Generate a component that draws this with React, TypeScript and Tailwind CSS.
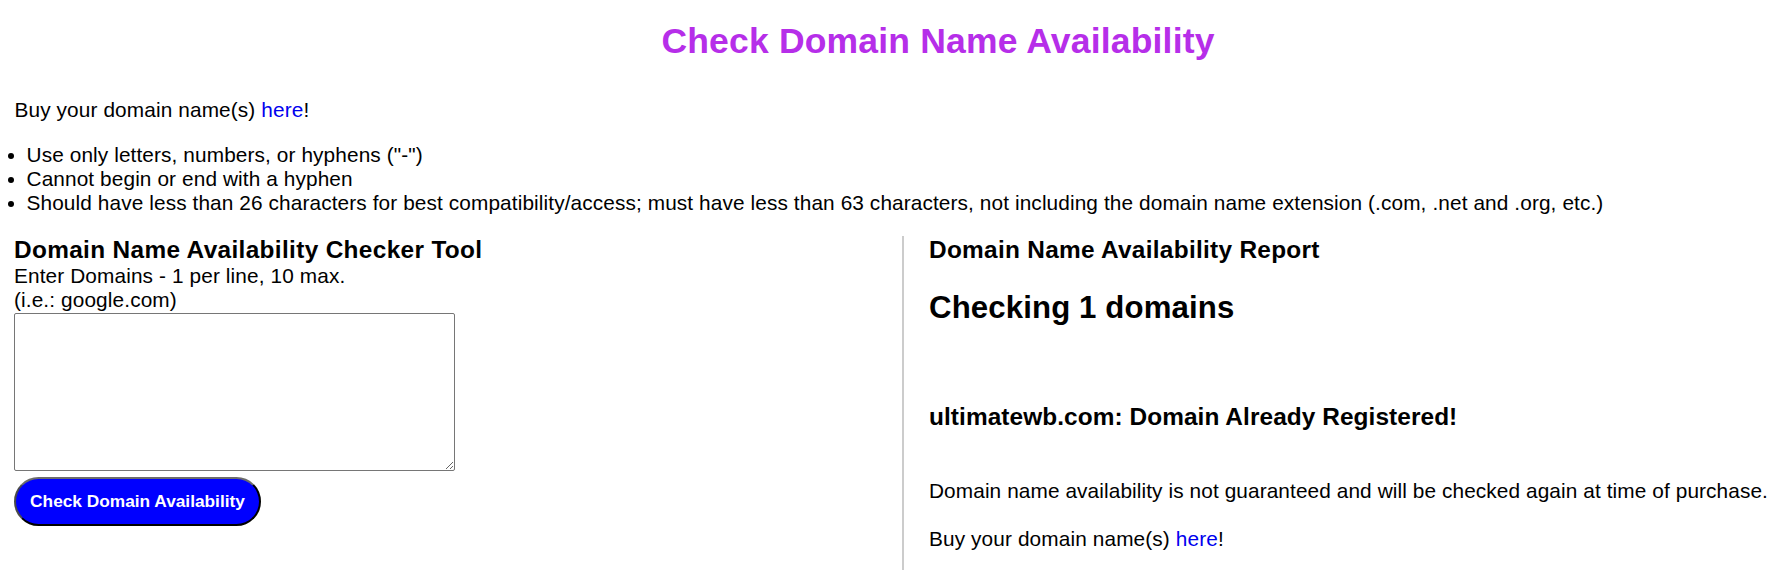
export default function App() {
  return (
    <div className="w-[1780px] h-[570px] overflow-hidden bg-white text-black font-['Liberation_Sans',Arial,sans-serif]">
      <h1 className="mt-[20.5px] pl-[96px] text-center text-[35.5px] leading-[1.15] font-bold tracking-[0.18px] text-[#b62ee9]">
        Check Domain Name Availability
      </h1>

      <p className="mt-[36.5px] px-[14.5px] text-[20.8px] leading-[1.15] tracking-[0.12px]">
        Buy your domain name(s){" "}
        <a href="#" className="text-[#0000ee]">
          here
        </a>
        !
      </p>

      <ul className="mt-[21px] list-disc list-outside pl-[26.5px] text-[20.8px] leading-[1.15] tracking-[0.11px]">
        <li>Use only letters, numbers, or hyphens ("-")</li>
        <li>Cannot begin or end with a hyphen</li>
        <li>
          Should have less than 26 characters for best compatibility/access; must have less than 63 characters, not
          including the domain name extension (.com, .net and .org, etc.)
        </li>
      </ul>

      <div className="mt-[21.5px] flex">
        {/* checker form */}
        <div className="w-[902px] shrink-0 pl-[14px]">
          <h3 className="text-[24.4px] leading-[1.15] font-bold tracking-[0.34px]">
            Domain Name Availability Checker Tool
          </h3>
          <p className="text-[20.8px] leading-[1.15] tracking-[0.12px]">Enter Domains - 1 per line, 10 max.</p>
          <p className="text-[20.8px] leading-[1.15] tracking-[0.12px]">(i.e.: google.com)</p>
          <textarea className="mt-[1.5px] block h-[158px] w-[441px] rounded-[2px] border border-[#767676] bg-white" />
          <button className="mt-[6px] flex h-[49px] w-[247px] items-center justify-center rounded-full border-2 border-black border-t-[#6b6b6b] border-l-[#4a4a4a] bg-[#0000ff] text-[17.3px] font-bold text-white">
            Check Domain Availability
          </button>
        </div>

        {/* report */}
        <div className="flex-1 border-l-2 border-[#cccccc] pl-[25px] pb-[40px]">
          <h3 className="text-[24.4px] leading-[1.15] font-bold tracking-[0.29px]">Domain Name Availability Report</h3>
          <h2 className="mt-[25.5px] text-[31.2px] leading-[1.15] font-bold tracking-[0.12px]">Checking 1 domains</h2>
          <h3 className="mt-[77.4px] text-[24.4px] leading-[1.15] font-bold tracking-[0.08px]">
            ultimatewb.com: Domain Already Registered!
          </h3>
          <p className="mt-[48.2px] whitespace-nowrap text-[20.8px] leading-[1.15] tracking-[0.1px]">
            Domain name availability is not guaranteed and will be checked again at time of purchase.
          </p>
          <p className="mt-[24px] text-[20.8px] leading-[1.15] tracking-[0.12px]">
            Buy your domain name(s){" "}
            <a href="#" className="text-[#0000ee]">
              here
            </a>
            !
          </p>
        </div>
      </div>
    </div>
  )
}
